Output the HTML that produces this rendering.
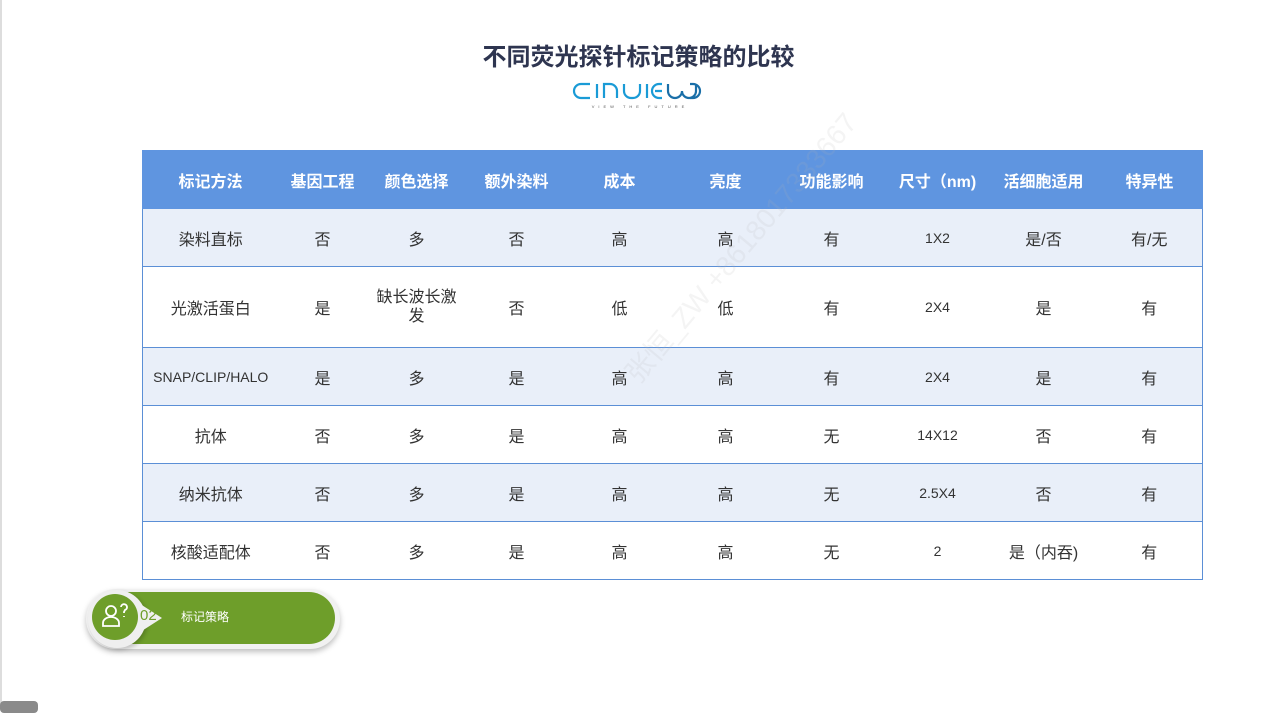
<!DOCTYPE html>
<html><head><meta charset="utf-8"><style>
body{margin:0;width:1273px;height:710px;background:#fff;position:relative;overflow:hidden;font-family:"Liberation Sans","Noto Sans CJK SC",sans-serif;}
.lb{position:absolute;left:0;top:0;width:2px;height:710px;background:#ddd}
h1{position:absolute;top:37px;left:0;width:1277px;text-align:center;margin:0;font-size:24px;font-weight:bold;color:#2e3550;}
table{position:absolute;left:142px;top:150px;border-collapse:collapse;width:1060px;table-layout:fixed;}
td,th{text-align:center;font-size:16px;color:#333;border-top:1.5px solid #5b8fd6;padding:0;}
th{background:#5f95e0;color:#fff;height:57px;font-weight:bold;border:1px solid #5f95e0}
tr.a td{background:#e9eff9}
td{height:57px;border-left:none;border-right:none}
table{border:1px solid #5b8fd6}
.sm{font-size:14px}
.wm{position:absolute;left:615px;top:365px;transform:rotate(-50deg);transform-origin:left top;color:rgba(180,180,180,0.15);font-size:28px;white-space:nowrap}
</style></head><body>
<div class="lb"></div>
<h1>不同荧光探针标记策略的比较</h1>
<svg style="position:absolute;left:572px;top:81px" width="136" height="30" viewBox="0 0 136 30">
<g fill="none" stroke="#1a9bd6" stroke-width="2.2">
<path d="M18 3H9a7 7 0 0 0 0 14h9"/>
<path d="M25 3v14"/>
<path d="M32 17V3h6a7 7 0 0 1 7 7v7"/>
<path d="M52 3v7a7 7 0 0 0 7 7h2a7 7 0 0 0 7-7V3"/>
<path d="M75 3v14"/>
<path d="M90 17h-3a7 7 0 0 1 0-14h3M83 10h7"/>
<path d="M96 3v7a7 7 0 0 0 14 0a7 7 0 0 0 14 0V3" stroke="#1a6fa8"/>
<path d="M118 3h3a7 7 0 0 1 0 14h-3" stroke="#1a6fa8"/>
</g>
<text x="68" y="27" font-size="4" fill="#555" text-anchor="middle" letter-spacing="4">VIEW THE FUTURE</text>
</svg>
<table>
<colgroup><col style="width:136px"><col style="width:88px"><col style="width:100px"><col style="width:100px"><col style="width:106px"><col style="width:106px"><col style="width:106px"><col style="width:106px"><col style="width:106px"><col style="width:106px"></colgroup>
<tr><th>标记方法</th><th>基因工程</th><th>颜色选择</th><th>额外染料</th><th>成本</th><th>亮度</th><th>功能影响</th><th>尺寸（nm)</th><th>活细胞适用</th><th>特异性</th></tr>
<tr class="a"><td>染料直标</td><td>否</td><td>多</td><td>否</td><td>高</td><td>高</td><td>有</td><td class="sm">1X2</td><td>是/否</td><td>有/无</td></tr>
<tr><td style="height:80px">光激活蛋白</td><td>是</td><td style="line-height:19px">缺长波长激<br>发</td><td>否</td><td>低</td><td>低</td><td>有</td><td class="sm">2X4</td><td>是</td><td>有</td></tr>
<tr class="a"><td class="sm">SNAP/CLIP/HALO</td><td>是</td><td>多</td><td>是</td><td>高</td><td>高</td><td>有</td><td class="sm">2X4</td><td>是</td><td>有</td></tr>
<tr><td>抗体</td><td>否</td><td>多</td><td>是</td><td>高</td><td>高</td><td>无</td><td class="sm">14X12</td><td>否</td><td>有</td></tr>
<tr class="a"><td>纳米抗体</td><td>否</td><td>多</td><td>是</td><td>高</td><td>高</td><td>无</td><td class="sm">2.5X4</td><td>否</td><td>有</td></tr>
<tr><td>核酸适配体</td><td>否</td><td>多</td><td>是</td><td>高</td><td>高</td><td>无</td><td class="sm">2</td><td>是（内吞)</td><td>有</td></tr>
</table>
<div class="wm">张恒_ZW +8618017333667</div>
<div style="position:absolute;left:86px;top:589px;width:254px;height:60px;border-radius:30px;background:#f1f1f1;box-shadow:0 3px 6px rgba(0,0,0,.25)"></div>
<div style="position:absolute;left:94px;top:592px;width:241px;height:52px;border-radius:26px;background:#6e9e2a"></div>
<div style="position:absolute;left:88px;top:590px;width:58px;height:58px;border-radius:50%;background:#efefef;box-shadow:2px 2px 4px rgba(0,0,0,.2)"></div>
<div style="position:absolute;left:134px;top:600px;width:0;height:0;border-top:18px solid transparent;border-bottom:18px solid transparent;border-left:28px solid #efefef"></div>
<div style="position:absolute;left:92px;top:594px;width:46px;height:46px;border-radius:50%;background:#6e9e2a"></div>
<svg style="position:absolute;left:100px;top:602px" width="32" height="30" viewBox="0 0 32 30"><g fill="none" stroke="#fff" stroke-width="1.8"><circle cx="11" cy="9" r="5"/><path d="M3 24v-3a8 6 0 0 1 16 0v3z"/><path d="M21 5a3 3 0 1 1 4 3l-1 2v1M24 14v1"/></g></svg>
<div style="position:absolute;left:140px;top:607px;color:#6e9e2a;font-size:15px;font-family:'Liberation Sans Narrow','Liberation Sans',sans-serif">02</div>
<div style="position:absolute;left:181px;top:608px;color:#fff;font-size:12px">标记策略</div>
<div style="position:absolute;left:0;top:701px;width:38px;height:12px;border-radius:4px;background:#8a8a8a"></div>
</body></html>
